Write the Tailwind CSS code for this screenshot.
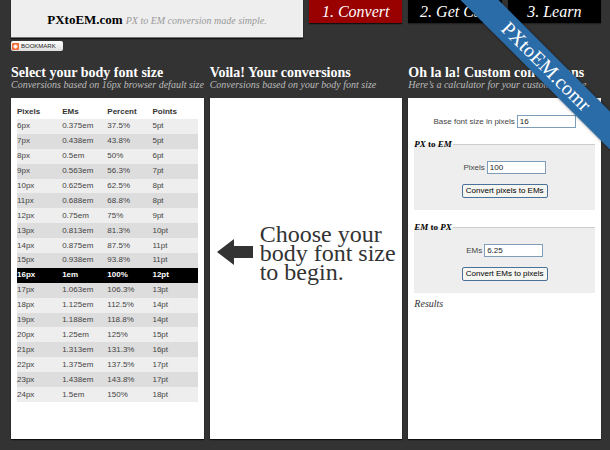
<!DOCTYPE html>
<html lang="en">
<head>
<meta charset="utf-8">
<title>PXtoEM.com</title>
<script src="https://cdn.jsdelivr.net/npm/@tailwindcss/browser@4"></script>
</head>
<body class="relative min-h-screen overflow-x-hidden bg-[#333] pl-[11px] pr-[9px] pb-[11px] font-['Liberation_Sans',sans-serif] text-[8px] text-[#444]">

<header class="grid grid-cols-6 items-start gap-x-[6px] font-['Liberation_Serif',serif]">
  <div class="col-span-3 flex h-[38px] items-baseline justify-center border-b border-[#777] bg-[#eee] pt-[12px] leading-[16px] whitespace-nowrap shadow-[0_1px_1px_#111]">
    <h1 class="text-[13px] font-bold text-black">PXtoEM.com</h1>
    <p class="pl-[3px] text-[10px] text-[#999] italic">PX to EM conversion made simple.</p>
  </div>
  <nav class="col-span-3 grid grid-cols-3 gap-x-[6px] text-center text-[16px] leading-[23px] whitespace-nowrap text-white italic">
    <a href="#convert" class="bg-[#900] shadow-[0_1px_1px_#111]">1. Convert</a>
    <a href="#css" class="bg-black shadow-[0_1px_1px_#222]">2. Get CSS</a>
    <a href="#learn" class="bg-black shadow-[0_1px_1px_#222]">3. Learn</a>
  </nav>
</header>

<a href="#bookmark" class="mt-[3px] flex h-[10px] w-[52px] items-center gap-[2px] rounded-[2px] bg-gradient-to-b from-white to-[#ddd] px-[1px]">
  <svg class="size-[7px]" viewBox="0 0 7 7"><rect width="7" height="7" rx="1" fill="#f26a35"/><path d="M3.5 1.5v4M1.5 3.5h4" stroke="#fff" stroke-width="2"/></svg>
  <span class="text-[6px] leading-[10px] text-[#222]">BOOKMARK</span>
</a>

<main class="mt-[15px] grid grid-cols-3 gap-x-[6px]">
  <section class="flex flex-col">
    <h2 class="font-['Liberation_Serif',serif] text-[14px] leading-[14px] font-bold whitespace-nowrap text-white">Select your body font size</h2>
    <p class="font-['Liberation_Serif',serif] text-[10px] leading-[10px] whitespace-nowrap text-[#bbb] italic">Conversions based on 16px browser default size</p>
    <div class="mt-[8px] min-h-[341px] grow bg-white px-[6px] pt-[7px] shadow-[0_1px_1px_#111]">
      <table class="h-[297px] w-full table-fixed border-collapse text-left leading-[14px]">
        <thead><tr class="text-[#333]"><th>Pixels</th><th>EMs</th><th>Percent</th><th>Points</th></tr></thead>
        <tbody class="[&>tr:nth-child(odd)]:bg-[#eee] [&>tr:nth-child(even)]:bg-[#ddd]">
          <tr><td>6px</td><td>0.375em</td><td>37.5%</td><td>5pt</td></tr>
          <tr><td>7px</td><td>0.438em</td><td>43.8%</td><td>5pt</td></tr>
          <tr><td>8px</td><td>0.5em</td><td>50%</td><td>6pt</td></tr>
          <tr><td>9px</td><td>0.563em</td><td>56.3%</td><td>7pt</td></tr>
          <tr><td>10px</td><td>0.625em</td><td>62.5%</td><td>8pt</td></tr>
          <tr><td>11px</td><td>0.688em</td><td>68.8%</td><td>8pt</td></tr>
          <tr><td>12px</td><td>0.75em</td><td>75%</td><td>9pt</td></tr>
          <tr><td>13px</td><td>0.813em</td><td>81.3%</td><td>10pt</td></tr>
          <tr><td>14px</td><td>0.875em</td><td>87.5%</td><td>11pt</td></tr>
          <tr><td>15px</td><td>0.938em</td><td>93.8%</td><td>11pt</td></tr>
          <tr class="bg-black! font-bold text-white"><td>16px</td><td>1em</td><td>100%</td><td>12pt</td></tr>
          <tr><td>17px</td><td>1.063em</td><td>106.3%</td><td>13pt</td></tr>
          <tr><td>18px</td><td>1.125em</td><td>112.5%</td><td>14pt</td></tr>
          <tr><td>19px</td><td>1.188em</td><td>118.8%</td><td>14pt</td></tr>
          <tr><td>20px</td><td>1.25em</td><td>125%</td><td>15pt</td></tr>
          <tr><td>21px</td><td>1.313em</td><td>131.3%</td><td>16pt</td></tr>
          <tr><td>22px</td><td>1.375em</td><td>137.5%</td><td>17pt</td></tr>
          <tr><td>23px</td><td>1.438em</td><td>143.8%</td><td>17pt</td></tr>
          <tr><td>24px</td><td>1.5em</td><td>150%</td><td>18pt</td></tr>
        </tbody>
      </table>
    </div>
  </section>

  <section class="flex flex-col">
    <h2 class="font-['Liberation_Serif',serif] text-[14px] leading-[14px] font-bold whitespace-nowrap text-white">Voila! Your conversions</h2>
    <p class="font-['Liberation_Serif',serif] text-[10px] leading-[10px] whitespace-nowrap text-[#bbb] italic">Conversions based on your body font size</p>
    <div class="mt-[8px] flex grow items-start gap-[7px] bg-white pt-[127px] pl-[7px] shadow-[0_1px_1px_#111]">
      <svg class="mt-[14px] h-[26px] w-[36px] shrink-0" viewBox="0 0 36 26"><path d="M0 13 17 0v7h19v12H17v7z" fill="#333"/></svg>
      <p class="font-['Liberation_Serif',serif] text-[24px] leading-[19px] whitespace-nowrap text-[#333]">Choose your<br>body font size<br>to begin.</p>
    </div>
  </section>

  <section class="flex flex-col">
    <h2 class="font-['Liberation_Serif',serif] text-[14px] leading-[14px] font-bold whitespace-nowrap text-white">Oh la la! Custom conversions</h2>
    <p class="font-['Liberation_Serif',serif] text-[10px] leading-[10px] whitespace-nowrap text-[#bbb] italic">Here’s a calculator for your custom font size</p>
    <form class="mt-[8px] grow bg-white px-[6px] pt-[17px] shadow-[0_1px_1px_#111]">
      <div class="flex items-center justify-center gap-[2px]">
        <label for="base">Base font size in pixels</label>
        <input id="base" value="16" class="h-[13px] w-[59px] border border-[#7f9db9] bg-white px-[2px] text-[#222]">
      </div>
      <fieldset class="mt-[11px] h-[71px] border-t border-[#ccc] bg-[#eee]">
        <legend class="pr-[1px] font-['Liberation_Serif',serif] text-[9px] leading-[10px] font-bold text-black"><i>PX</i> to <i>EM</i></legend>
        <div class="mt-[12px] flex items-center justify-center gap-[2px]">
          <label for="px">Pixels</label>
          <input id="px" value="100" class="h-[13px] w-[59px] border border-[#7f9db9] bg-white px-[2px] text-[#222]">
        </div>
        <button type="button" class="mx-auto mt-[10px] block h-[14px] w-[86px] rounded-[2px] border border-[#4a7299] bg-[#f5f5f2] text-[8px] leading-[12px] whitespace-nowrap text-black">Convert pixels to EMs</button>
      </fieldset>
      <fieldset class="mt-[12px] h-[71px] border-t border-[#ccc] bg-[#eee]">
        <legend class="pr-[1px] font-['Liberation_Serif',serif] text-[9px] leading-[10px] font-bold text-black"><i>EM</i> to <i>PX</i></legend>
        <div class="mt-[12px] flex items-center justify-center gap-[2px]">
          <label for="em">EMs</label>
          <input id="em" value="6.25" class="h-[13px] w-[59px] border border-[#7f9db9] bg-white px-[2px] text-[#222]">
        </div>
        <button type="button" class="mx-auto mt-[10px] block h-[14px] w-[86px] rounded-[2px] border border-[#4a7299] bg-[#f5f5f2] text-[8px] leading-[12px] whitespace-nowrap text-black">Convert EMs to pixels</button>
      </fieldset>
      <p class="mt-[5px] font-['Liberation_Serif',serif] text-[10px] leading-[12px] text-[#333] italic">Results</p>
    </form>
  </section>
</main>

<div class="pointer-events-none absolute top-0 right-0 h-[160px] w-[160px] overflow-hidden">
  <div class="absolute top-[53px] right-[-56px] h-[27px] w-[240px] rotate-45 bg-[#2a6ca8] text-center font-['Liberation_Serif',serif] text-[20px] leading-[26px] text-white shadow-[0_0_3px_#0008]">PXtoEM.comr</div>
</div>
</body>
</html>
